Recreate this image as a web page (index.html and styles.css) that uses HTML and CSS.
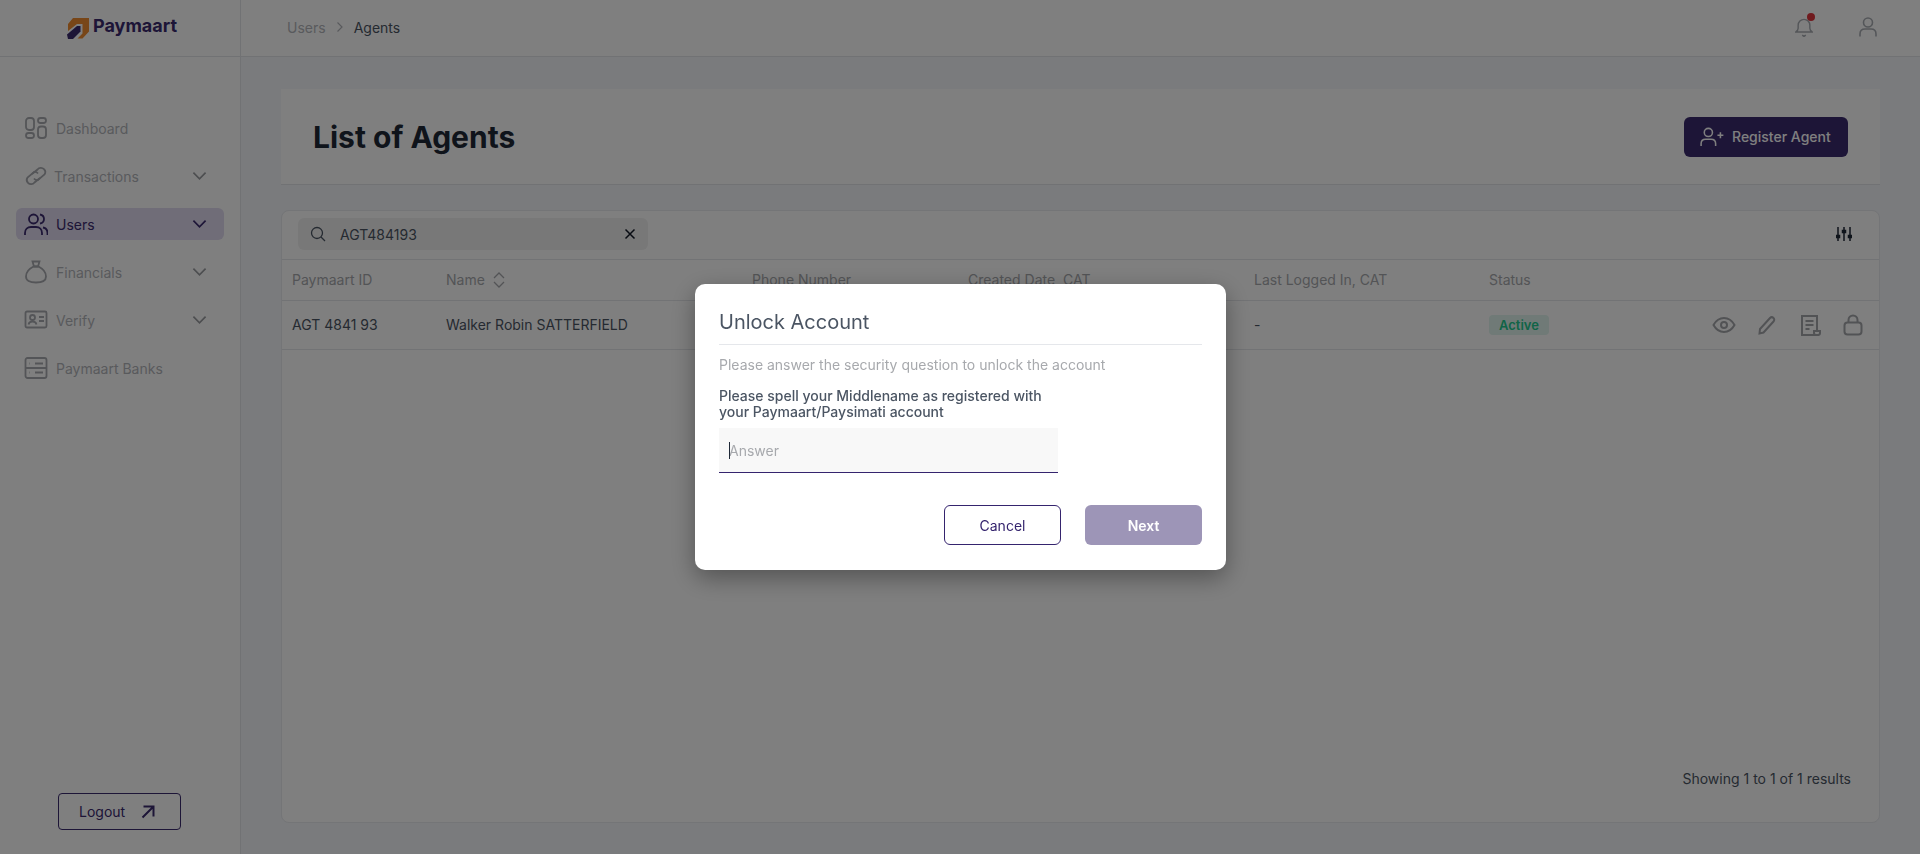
FILE: index.html
```html
<!DOCTYPE html>
<html lang="en">
<head>
  <meta charset="UTF-8">
  <meta name="viewport" content="width=device-width, initial-scale=1.0">
  <title>Paymaart - List of Agents</title>
  <link rel="stylesheet" href="styles.css">
</head>
<body>

  <div class="app">
    <aside class="sidebar">
      <div class="brand">
        <svg class="brand-mark" viewBox="0 0 22 21" width="22" height="21">
          <path fill="#f08c30" d="M6 0H22V13.500L15.500 20.500H10.500L15.500 15.500V6H10L1 13V6z"/>
          <path fill="#3b2a6f" d="M1 21L0 16.500L10 8H13.500V13.500L6 21z"/>
        </svg>
        <span class="brand-name">Paymaart</span>
      </div>

      <nav class="nav">
        <a class="nav-item">
          <svg class="icon" viewBox="0 0 24 24">
            <rect x="2" y="2" width="8" height="12" rx="3"/>
            <rect x="14" y="2" width="8" height="5" rx="2.500"/>
            <rect x="2" y="17" width="8" height="5" rx="2.500"/>
            <rect x="14" y="10.500" width="8" height="11.500" rx="3"/>
          </svg>
          <span>Dashboard</span>
        </a>
        <a class="nav-item nav-tight">
          <svg class="icon" viewBox="0 0 24 24">
            <path d="M8 10L13.500 5.500A4.200 4.200 0 0 1 20 5.200A4.200 4.200 0 0 1 20.500 10.500L14 16A4 4 0 0 1 10 14.500"/>
            <path d="M16 14L10.500 18.500A4.200 4.200 0 0 1 4 18.800A4.200 4.200 0 0 1 3.500 13.500L10 8A4 4 0 0 1 14 9.500"/>
          </svg>
          <span>Transactions</span>
          <svg class="chevron" viewBox="0 0 16 10"><path d="M1.500 1.500L8 8l6.500-6.500"/></svg>
        </a>
        <a class="nav-item active">
          <svg class="icon" viewBox="0 0 24 24">
            <circle cx="9.500" cy="7" r="4.500"/>
            <path d="M16 2.500c2.500.5 4 2.300 4 4.500s-1.500 4-4 4.500"/>
            <path d="M1 23v-2c0-3.500 2.500-6 6-6h5c3.500 0 6 2.500 6 6v2"/>
            <path d="M19 15.500c2.500.5 4.500 2.500 4.500 5.500v2"/>
          </svg>
          <span>Users</span>
          <svg class="chevron" viewBox="0 0 16 10"><path d="M1.500 1.500L8 8l6.500-6.500"/></svg>
        </a>
        <a class="nav-item">
          <svg class="icon" viewBox="0 0 24 24">
            <path d="M8.500 1.500h7l-1.500 5h-4z"/>
            <path d="M9.500 6.500h5c4 2 7.500 6 7.500 10 0 4-3.500 6-10 6s-10-2-10-6c0-4 3.500-8 7.500-10z"/>
          </svg>
          <span>Financials</span>
          <svg class="chevron" viewBox="0 0 16 10"><path d="M1.500 1.500L8 8l6.500-6.500"/></svg>
        </a>
        <a class="nav-item">
          <svg class="icon" viewBox="0 0 24 24">
            <rect x="1.500" y="3.500" width="21" height="16" rx="1.500"/>
            <circle cx="8.500" cy="9.500" r="2.500"/>
            <path d="M4.500 16.500c.5-2 2-3 4-3s3.500 1 4 3"/>
            <path d="M15 9h5M15 13h5"/>
          </svg>
          <span>Verify</span>
          <svg class="chevron" viewBox="0 0 16 10"><path d="M1.500 1.500L8 8l6.500-6.500"/></svg>
        </a>
        <a class="nav-item">
          <svg class="icon" viewBox="0 0 24 24">
            <rect x="1.500" y="2" width="21" height="20" rx="2"/>
            <path d="M1.500 12h21M11 7.500h8M11 16.500h8"/>
            <path d="M5.500 7.500h.5M5.500 16.500h.5"/>
          </svg>
          <span>Paymaart Banks</span>
        </a>
      </nav>

      <div class="sidebar-foot">
        <button class="logout">
          <span>Logout</span>
          <svg viewBox="0 0 14 14" width="14" height="14"><path d="M1.500 12.500L12.500 1.500M2.500 1.500h10v10"/></svg>
        </button>
      </div>
    </aside>

    <main class="main">
      <header class="topbar">
        <div class="crumbs">
          <span class="crumb-link">Users</span>
          <svg class="crumb-sep" viewBox="0 0 8 12" width="8" height="12"><path d="M1.500 1.500L6 6l-4.500 4.500"/></svg>
          <span class="crumb-current">Agents</span>
        </div>
        <div class="topbar-icons">
          <span class="bell">
            <svg viewBox="0 0 20 22" width="18" height="20">
              <path d="M1 16.500c1.500-1 2.500-2 2.500-4V9a6.500 6.500 0 0 1 13 0v3.500c0 2 1 3 2.500 4z"/>
              <path d="M8 20l2 1.500L12 20"/>
            </svg>
            <i class="bell-dot"></i>
          </span>
          <svg class="user-icon" viewBox="0 0 18 20" width="18" height="20">
            <circle cx="9" cy="5.500" r="4.500"/>
            <path d="M1 19.500V17c0-3 2-5 5-5h6c3 0 5 2 5 5v2.500"/>
          </svg>
        </div>
      </header>

      <div class="content">
        <section class="page-head">
          <h1>List of Agents</h1>
          <button class="btn-register">
            <svg viewBox="0 0 26 22" width="24" height="20">
              <circle cx="9" cy="6" r="4.500"/>
              <path d="M1 21v-2.500c0-3 2-5 5-5h6c3 0 5 2 5 5V21"/>
              <path d="M19 9h6.500M22.250 5.750v6.500"/>
            </svg>
            <span>Register Agent</span>
          </button>
        </section>

        <section class="table-card">
          <div class="table-tools">
            <div class="search">
              <svg class="search-icon" viewBox="0 0 16 16" width="16" height="16">
                <circle cx="7" cy="7" r="5.500"/>
                <path d="M11 11l4 4"/>
              </svg>
              <span class="search-value">AGT484193</span>
              <svg class="search-clear" viewBox="0 0 12 12" width="12" height="12"><path d="M1.500 1.500l9 9M10.500 1.500l-9 9"/></svg>
            </div>
            <svg class="filter-icon" viewBox="0 0 16 16" width="16" height="16">
              <path d="M2 1v14M8 1v14M14 1v14"/>
              <path class="filter-knob" d="M.5 9.500h3v2h-3zM6.500 4.500h3v2h-3zM12.500 9.500h3v2h-3z"/>
            </svg>
          </div>

          <table class="agents">
            <thead>
              <tr>
                <th class="col-id">Paymaart ID</th>
                <th class="col-name">
                  <span class="sortable">Name
                    <svg viewBox="0 0 12 16" width="12" height="16"><path d="M1 6l5-5 5 5M1 10l5 5 5-5"/></svg>
                  </span>
                </th>
                <th class="col-phone">Phone Number</th>
                <th class="col-created">Created Date, CAT</th>
                <th class="col-login">Last Logged In, CAT</th>
                <th class="col-status">Status</th>
                <th></th>
              </tr>
            </thead>
            <tbody>
              <tr>
                <td>AGT 4841 93</td>
                <td>Walker Robin SATTERFIELD</td>
                <td></td>
                <td></td>
                <td>-</td>
                <td><span class="badge">Active</span></td>
                <td>
                  <div class="row-actions">
                    <svg viewBox="0 0 24 24" width="24" height="24">
                      <path d="M1.500 12C4 7.500 8 5 12 5s8 2.500 10.500 7C20 16.500 16 19 12 19s-8-2.500-10.500-7z"/>
                      <circle cx="12" cy="12" r="3"/>
                    </svg>
                    <svg viewBox="0 0 24 24" width="24" height="24">
                      <path d="M4.500 20.500l.5-4.500L15 5c1-1 2.500-1 3.500 0s1 2.500 0 3.500L8.500 19.500z"/>
                    </svg>
                    <svg viewBox="0 0 24 24" width="24" height="24">
                      <path d="M19 18V3H4v19h17"/>
                      <path d="M7.500 8h8M7.500 12h8M7.500 16h4"/>
                      <path d="M16 18h6v2a2 2 0 0 1-2 2h-2a2 2 0 0 1-2-2z"/>
                    </svg>
                    <svg viewBox="0 0 24 24" width="24" height="24">
                      <rect x="3.500" y="9.500" width="17" height="12" rx="3"/>
                      <path d="M7.500 9.500V7a4.500 4.500 0 0 1 9 0v2.500"/>
                    </svg>
                  </div>
                </td>
              </tr>
            </tbody>
          </table>

          <p class="results">Showing 1 to 1 of 1 results</p>
        </section>
      </div>
    </main>
  </div>

  <!-- Unlock account dialog -->
  <div class="overlay">
    <div class="modal">
      <h2>Unlock Account</h2>
      <p class="modal-sub">Please answer the security question to unlock the account</p>
      <label class="modal-label" for="answer">Please spell your Middlename as registered with your Paymaart/Paysimati account</label>
      <div class="answer-field">
        <i class="caret"></i>
        <input type="text" id="answer" placeholder="Answer">
      </div>
      <div class="modal-actions">
        <button class="btn-cancel">Cancel</button>
        <button class="btn-next">Next</button>
      </div>
    </div>
  </div>

</body>
</html>
```

FILE: styles.css
```css
* {
  box-sizing: border-box;
}

html,
body {
  height: 100%;
  overflow: hidden;
}

body {
  margin: 0;
  font-family: Inter, "Liberation Sans", sans-serif;
  font-size: 14px;
  color: #4b5563;
  background-color: #f4f6fa;
}

button {
  font-family: inherit;
}

svg {
  fill: none;
  stroke: currentColor;
  flex-shrink: 0;
}

.app {
  display: flex;
  height: 100%;
  overflow: hidden;
}

/* Sidebar */
.sidebar {
  width: 241px;
  display: flex;
  flex-direction: column;
  background-color: white;
  border-right: 1px solid #e2e4e8;
}

.brand {
  height: 57px;
  padding-left: 67px;
  display: flex;
  align-items: center;
  gap: 4px;
  border-bottom: 1px solid #e2e4e8;
}

.brand-mark {
  stroke: none;
  margin-top: 1px;
}

.brand-name {
  font-size: 18px;
  font-weight: 700;
  color: #3b2a6f;
  margin-top: -5px;
}

.nav {
  margin-top: 55px;
  padding: 0 16px;
  display: flex;
  flex-direction: column;
  gap: 16px;
}

.nav-item {
  height: 32px;
  padding: 0 17px 0 8px;
  display: flex;
  align-items: center;
  gap: 8px;
  border-radius: 6px;
  color: #b3b5ba;
}

.nav-tight {
  gap: 6px;
}

.nav-item .icon {
  width: 24px;
  height: 24px;
  stroke-width: 1.800;
  color: #a9abb0;
}

.nav-item .chevron {
  width: 15px;
  height: 10px;
  margin-left: auto;
  stroke-width: 1.800;
  color: #9a9ca1;
}

.nav-item.active {
  background-color: #e0daf0;
  color: #3b2a6f;
}

.nav-item.active .icon,
.nav-item.active .chevron {
  color: #3b2a6f;
}

.sidebar-foot {
  margin-top: auto;
  padding: 0 0 24px 58px;
}

.logout {
  width: 123px;
  height: 37px;
  padding: 0 0 0 20px;
  display: flex;
  align-items: center;
  gap: 16px;
  background-color: white;
  border: 1px solid #3b2a6f;
  border-radius: 4px;
  color: #3b2a6f;
  font-size: 14px;
}

.logout svg {
  stroke-width: 2;
}

/* Top bar */
.main {
  flex: 1;
  display: flex;
  flex-direction: column;
  min-width: 0;
}

.topbar {
  height: 57px;
  padding: 0 43px 2px 46px;
  display: flex;
  align-items: center;
  justify-content: space-between;
  background-color: white;
  border-bottom: 1px solid #e2e4e8;
}

.crumbs {
  display: flex;
  align-items: center;
  gap: 10px;
}

.crumb-link {
  color: #b3b5ba;
}

.crumb-sep {
  color: #b3b5ba;
  stroke-width: 1.200;
}

.crumb-current {
  color: #4b5563;
}

.topbar-icons {
  display: flex;
  align-items: center;
  gap: 46px;
}

.bell {
  position: relative;
  display: flex;
  color: #a9adb3;
}

.bell svg {
  stroke-width: 1.600;
}

.bell-dot {
  position: absolute;
  top: -4px;
  right: -2px;
  width: 8px;
  height: 8px;
  border-radius: 50%;
  background-color: #e0353c;
}

.user-icon {
  color: #a9adb3;
  stroke-width: 1.600;
}

/* Page content */
.content {
  flex: 1;
  min-height: 0;
  padding: 32px 40px 31px;
  display: flex;
  flex-direction: column;
  gap: 25px;
}

.page-head {
  height: 96px;
  padding: 0 32px;
  display: flex;
  align-items: center;
  justify-content: space-between;
  background-color: white;
  border-bottom: 1px solid #e2e4e8;
}

h1 {
  margin: 0;
  font-size: 30px;
  font-weight: 700;
  color: #1f2937;
}

.btn-register {
  width: 164px;
  height: 40px;
  padding: 0 0 0 16px;
  display: flex;
  align-items: center;
  gap: 8px;
  background-color: #3b2a6f;
  border: none;
  border-radius: 6px;
  color: white;
  font-size: 14px;
  font-weight: 500;
}

.btn-register svg {
  stroke-width: 1.700;
}

.table-card {
  flex: 1;
  display: flex;
  flex-direction: column;
  background-color: white;
  border: 1px solid #e8eaee;
  border-radius: 8px;
}

.table-tools {
  height: 49px;
  padding: 0 27px 2px 16px;
  display: flex;
  align-items: center;
  justify-content: space-between;
  border-bottom: 1px solid #e5e7eb;
}

.search {
  width: 350px;
  height: 32px;
  padding: 0 12px;
  display: flex;
  align-items: center;
  background-color: #f1f1f1;
  border-radius: 6px;
  color: #4b5563;
}

.search-icon {
  stroke-width: 1.300;
}

.search-value {
  margin-left: 14px;
}

.search-clear {
  margin-left: auto;
  color: #111827;
  stroke-width: 1.500;
}

.filter-icon {
  color: #1f2937;
  stroke-width: 1.500;
}

.filter-knob {
  fill: currentColor;
}

.agents {
  width: 100%;
  border-collapse: collapse;
  table-layout: fixed;
}

.agents th,
.agents td {
  padding: 0 0 0 10px;
  text-align: left;
  font-weight: 400;
  border-bottom: 1px solid #e5e7eb;
}

.agents th {
  height: 40px;
  color: #a7a9ad;
}

.agents td {
  height: 49px;
  color: #4b5563;
}

.col-id {
  width: 154px;
}

.col-name {
  width: 306px;
}

.col-phone {
  width: 216px;
}

.col-created {
  width: 286px;
}

.col-login {
  width: 235px;
}

.col-status {
  width: 190px;
}

.sortable {
  display: flex;
  align-items: center;
  gap: 8px;
}

.sortable svg {
  stroke-width: 1.300;
}

.badge {
  display: inline-block;
  padding: 2px 10px;
  background-color: #e0f5ee;
  border-radius: 4px;
  color: #22c98f;
  font-size: 13px;
  font-weight: 600;
}

.row-actions {
  display: flex;
  align-items: center;
  justify-content: flex-end;
  gap: 19px;
  padding-right: 14px;
  color: #a4a6ab;
}

.row-actions svg {
  stroke-width: 2;
}

.results {
  margin: auto 28px 35px 0;
  text-align: right;
  color: #4b5563;
}

/* Unlock dialog */
.overlay {
  position: fixed;
  inset: 0;
  padding-left: 1px;
  display: flex;
  align-items: center;
  justify-content: center;
  background-color: rgba(0, 0, 0, 0.5);
}

.modal {
  width: 531px;
  height: 286px;
  padding: 24px;
  background-color: white;
  border-radius: 10px;
  box-shadow: 0 8px 24px rgba(0, 0, 0, 0.35);
}

h2 {
  margin: 0 0 11px;
  padding: 1px 0 8px;
  font-size: 20px;
  line-height: 27px;
  font-weight: 400;
  color: #4b5563;
  border-bottom: 1px solid #e5e7eb;
}

.modal-sub {
  margin: 0 0 15px;
  line-height: 17px;
  color: #a7a9ad;
}

.modal-label {
  display: block;
  width: 340px;
  line-height: 16px;
  font-weight: 500;
  color: #4b5563;
}

.answer-field {
  position: relative;
  width: 339px;
  margin-top: 8px;
}

.answer-field input {
  width: 100%;
  height: 45px;
  padding: 0 10px;
  background-color: #f8f8f8;
  border: none;
  border-bottom: 1px solid #35246e;
  border-radius: 0;
  outline: none;
  font-family: inherit;
  font-size: 14px;
}

.answer-field input::placeholder {
  color: #a7a9ad;
}

.caret {
  position: absolute;
  left: 10px;
  top: 14px;
  width: 1px;
  height: 17px;
  background-color: #1f2937;
}

.modal-actions {
  margin-top: 32px;
  display: flex;
  justify-content: flex-end;
  gap: 24px;
}

.btn-cancel,
.btn-next {
  width: 117px;
  height: 40px;
  border-radius: 6px;
  font-size: 14px;
}

.btn-cancel {
  background-color: white;
  border: 1px solid #35246e;
  color: #35246e;
}

.btn-next {
  background-color: #9d95b7;
  border: none;
  color: white;
  font-weight: 600;
}
```
